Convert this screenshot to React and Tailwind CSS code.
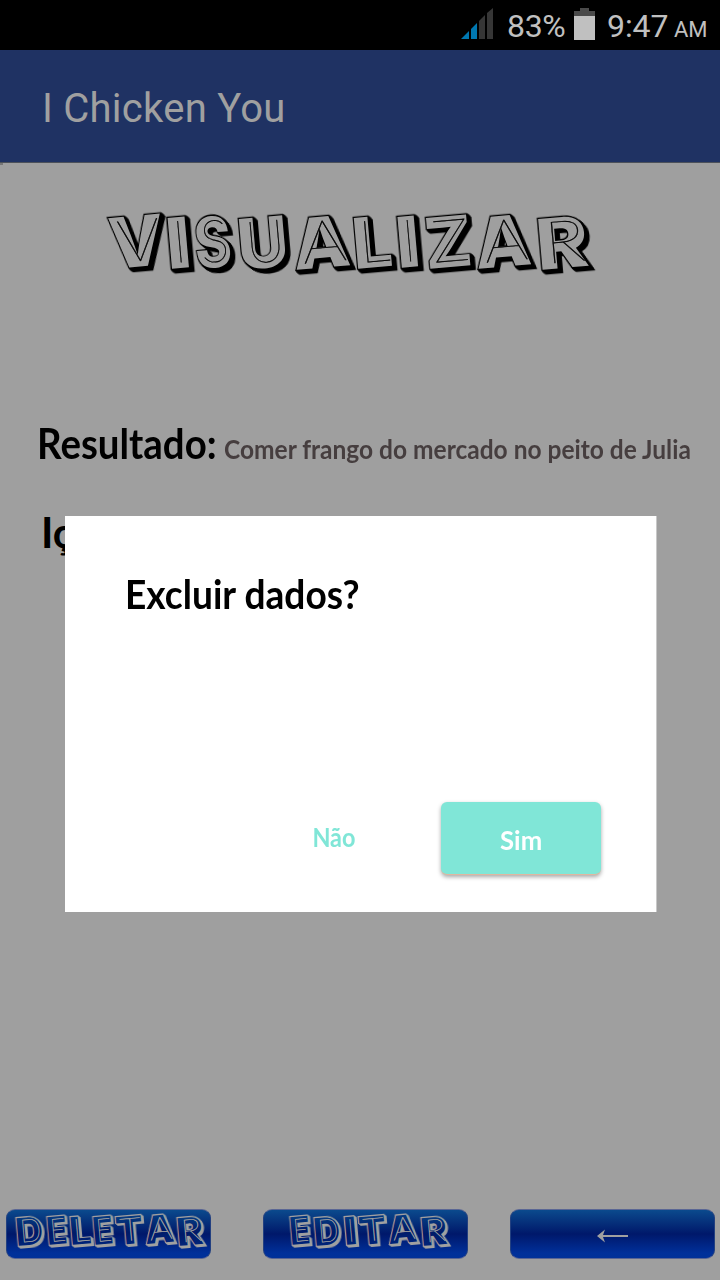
import React from "react";

const TITLE = [
  ["V", 111, 55, 269],
  ["I", 168, 25, 269],
  ["S", 197, 36, 269],
  ["U", 240, 50, 270],
  ["A", 295, 57, 270],
  ["L", 355, 39, 269],
  ["I", 398, 24, 268],
  ["Z", 427, 47, 269],
  ["A", 477, 56, 269],
  ["R", 539, 51, 270],
];
const DELETE = [
  ["D", 17, 27, 1246],
  ["E", 48, 20, 1245],
  ["L", 71, 21, 1245],
  ["E", 94, 20, 1245],
  ["T", 117, 27, 1245],
  ["A", 146, 29, 1244],
  ["R", 178, 26, 1246],
];
const EDIT = [
  ["E", 291, 20, 1245],
  ["D", 315, 26, 1246],
  ["I", 345, 13, 1245],
  ["T", 360, 27, 1245],
  ["A", 389, 29, 1244],
  ["R", 422, 26, 1246],
];

// One tilted letter: extruded outline, face, thin inner line.
function Letter({ ch, x, w, y, size, depth, ink, face, line }) {
  const common = {
    textLength: w,
    lengthAdjust: "spacingAndGlyphs",
    fontFamily: "Inter, sans-serif",
    fontSize: size,
    fontWeight: 900,
  };
  const inner = ch === "I" ? w * 0.5 : w * 0.78;
  return (
    <g transform={`translate(${x} ${y}) rotate(-5)`}>
      <text {...common} fill={ink} stroke={ink} strokeWidth={line * 2} className={depth}>
        {ch}
      </text>
      <text {...common} fill={face}>
        {ch}
      </text>
      <text
        aria-hidden="true"
        {...common}
        x={(w - inner) / 2 + w * 0.05}
        y={-size * 0.08}
        textLength={inner}
        fontSize={size * 0.84}
        fontFamily="Lato, sans-serif"
        fontWeight="100"
        fill={ink}
        stroke={ink}
        strokeWidth="0.4"
      >
        {ch}
      </text>
    </g>
  );
}

function Lettering({ letters, ox, oy, label, className, ...style }) {
  return (
    <svg className={className} role="img" aria-label={label} overflow="visible">
      <defs>
        <linearGradient id="blueFace" x1="0" y1="0" x2="0" y2="1">
          <stop offset="0.2" stopColor="#053a80" />
          <stop offset="0.55" stopColor="#001a68" />
          <stop offset="1" stopColor="#002b86" />
        </linearGradient>
      </defs>
      {letters.map(([ch, x, w, y], i) => (
        <Letter key={i} ch={ch} x={x - ox} w={w} y={y - oy} {...style} />
      ))}
    </svg>
  );
}

const DEEP =
  "[filter:drop-shadow(1px_1px_0_#000)_drop-shadow(1px_1px_0_#000)_drop-shadow(1px_1px_0_#000)_drop-shadow(1px_1px_0_#000)]";
const SHALLOW = "[filter:drop-shadow(1px_1px_0_#a0a0a0)_drop-shadow(1px_1px_0_#a0a0a0)]";

const BUTTON =
  "flex h-[50px] w-[205px] items-center justify-center rounded-[9px] border border-[#5a6694] border-x-[#234080] bg-[linear-gradient(#0b4a8d_0%,#00186a_50%,#00309a_90%,#003199_100%)]";

function StatusBar() {
  return (
    <header className="flex h-[50px] shrink-0 items-start bg-black pl-[461px] font-[Roboto,sans-serif] text-[#c0c0c0]">
      <svg className="mt-[8px] h-[32px] w-[33px] shrink-0" viewBox="0 0 33 32">
        <path d="M0 31 8 23V31Z" fill="#0077b0" />
        <path d="M10 21 16 15V31H10Z" fill="#0077b0" />
        <path d="M18 13 24 7V31H18Z" fill="#363636" />
        <path d="M26 5 32 0V31H26Z" fill="#363636" />
      </svg>
      <span className="ml-[13px] mt-[6px] w-[60px] whitespace-nowrap text-[32px] leading-[40px] tracking-[-0.3px]">83%</span>
      <svg className="ml-[7px] mt-[8px] h-[32px] w-[21px] shrink-0" viewBox="0 0 21 32">
        <path d="M0 3H6V0H15V3H21V8H0Z" fill="#4a4a4a" />
        <path d="M0 8H21V32H0Z" fill="#c0c0c0" />
      </svg>
      <span className="ml-[12px] mt-[6px] w-[62px] whitespace-nowrap text-[32px] leading-[40px] tracking-[-0.1px]">9:47</span>
      <span className="ml-[5px] mt-[11px] text-[22px] leading-[38px]">AM</span>
    </header>
  );
}

export default function App() {
  return (
    <div className="relative flex h-[1280px] w-[720px] flex-col overflow-hidden bg-[#9f9f9f] font-[Lato,sans-serif]">
      <StatusBar />
      <div className="flex h-[113px] shrink-0 items-center border-b border-[#4c515a] bg-[#1f3263] pl-[42px] pt-[5px] font-[Roboto,sans-serif] text-[40px] tracking-[0.25px] text-[#a0a0a0]">
        <h1>I Chicken You</h1>
      </div>
      <div className="h-[2px] w-[3px] shrink-0 bg-[#777]" />
      <main className="flex flex-1 flex-col">
        <Lettering
          letters={TITLE}
          ox={100}
          oy={205}
          size={70}
          depth={DEEP}
          ink="#000"
          face="#9f9f9f"
          line={1.2}
          label="VISUALIZAR"
          className="ml-[100px] mt-[40px] h-[80px] w-[510px] shrink-0"
        />
        <div className="mt-[128px] flex h-[60px] items-baseline pl-[37px] font-bold">
          <span className="w-[187px] origin-left scale-x-[0.915] whitespace-nowrap text-[42px] leading-[60px] text-black">Resultado:</span>
          <span className="origin-left scale-x-[0.908] whitespace-nowrap text-[27px] text-[#463e3f]">Comer frango do mercado no peito de Julia</span>
        </div>
        <p className="mt-[29px] h-[60px] pl-[41px] text-[42px] font-bold leading-[60px] text-black">Iç</p>
        <div className="mb-[21px] mt-auto flex gap-x-[52px] pl-[6px]">
          <button className={BUTTON}>
            <Lettering letters={DELETE} ox={7} oy={1210} size={38} depth={SHALLOW} ink="#a0a0a0" face="url(#blueFace)" line={1} label="DELETAR" className="h-[48px] w-[203px]" />
          </button>
          <button className={BUTTON}>
            <Lettering letters={EDIT} ox={264} oy={1210} size={38} depth={SHALLOW} ink="#a0a0a0" face="url(#blueFace)" line={1} label="EDITAR" className="h-[48px] w-[203px]" />
          </button>
          <button className={BUTTON + " -ml-[10px]"} aria-label="Voltar">
            <svg className="mt-[3px] h-[14px] w-[32px]" viewBox="0 0 32 14">
              <path d="M0 7 8 .5 6 6H31V8H6L8 13.5Z" fill="#a0a0a0" />
            </svg>
          </button>
        </div>
      </main>
      <section role="dialog" className="absolute left-[65px] top-[516px] flex h-[396px] w-[592px] flex-col justify-between border-r border-[#c8c8c8] bg-white pb-[37px] pl-[60px] pr-[55px] pt-[48px] font-bold">
        <h2 className="origin-left scale-x-[0.928] text-[40px] leading-[60px] text-black">Excluir dados?</h2>
        <div className="flex items-center justify-end">
          <button className="mb-[2px] mr-[54px] w-[106px] text-center text-[26px] text-[#80e6d7]">
            <span className="inline-block scale-x-[0.9]">Não</span>
          </button>
          <button className="h-[73px] w-[160px] rounded-[6px] border-b border-[#dfb7a0] bg-[#80e6d7] pt-[5px] text-[27px] text-white shadow-[0_2px_4px_rgba(0,0,0,0.35)]">
            <span className="inline-block scale-x-[0.95]">Sim</span>
          </button>
        </div>
      </section>
    </div>
  );
}
